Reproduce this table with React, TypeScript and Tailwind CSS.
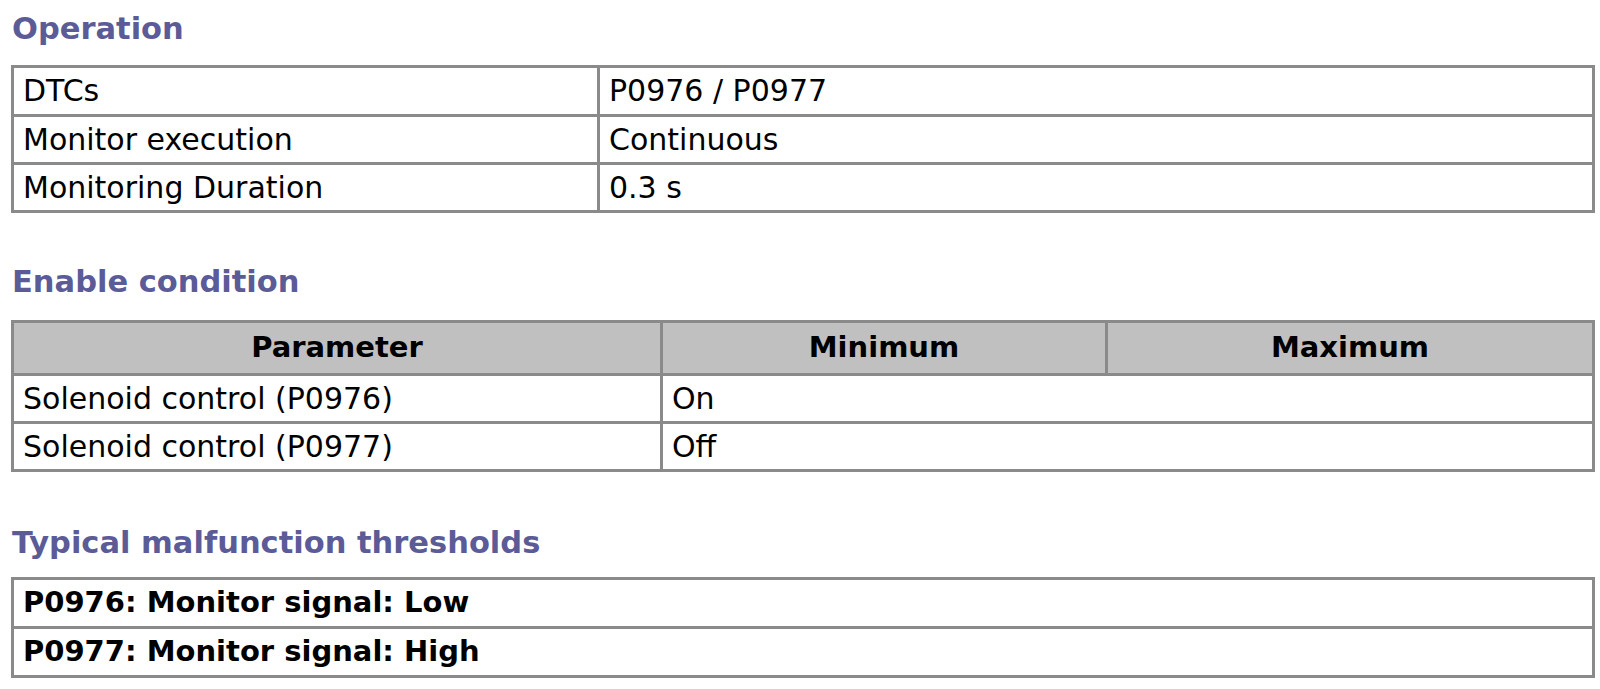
const cellText = "text-[30px] leading-none text-black";

function Heading({ children }: { children: string }) {
  return (
    <h2 className="pl-[12px] text-[30.5px] leading-[36px] font-bold text-[#5b5b97]">
      {children}
    </h2>
  );
}

function Row({ height, cells }: { height: string; cells: [string, string] }) {
  return (
    <div className={`flex ${height}`}>
      <div className={`w-[586px] shrink-0 flex items-center pl-[9px] border-r-[3px] border-[#8a8a8a] ${cellText}`}>
        {cells[0]}
      </div>
      <div className={`flex-1 flex items-center pl-[9px] ${cellText}`}>{cells[1]}</div>
    </div>
  );
}

function ParamRow({ cells }: { cells: [string, string] }) {
  return (
    <div className="flex h-[48px] border-t-[3px] border-[#8a8a8a]">
      <div className={`w-[649px] shrink-0 flex items-center pl-[9px] border-r-[3px] border-[#8a8a8a] ${cellText}`}>
        {cells[0]}
      </div>
      <div className={`flex-1 flex items-center pl-[9px] ${cellText}`}>{cells[1]}</div>
    </div>
  );
}

export default function App() {
  return (
    <div className="min-h-screen bg-white font-['DejaVu_Sans',Verdana,sans-serif]">
      <div className="pt-[11px] pb-[14px]">
        <Heading>Operation</Heading>
        <div className="ml-[11px] mt-[18px] w-[1584px] border-[3px] border-[#8a8a8a]">
          <Row height="h-[46px]" cells={["DTCs", "P0976 / P0977"]} />
          <Row height="h-[48px] border-t-[3px] border-[#8a8a8a]" cells={["Monitor execution", "Continuous"]} />
          <Row height="h-[48px] border-t-[3px] border-[#8a8a8a]" cells={["Monitoring Duration", "0.3 s"]} />
        </div>

        <div className="mt-[51px]">
          <Heading>Enable condition</Heading>
        </div>
        <div className="ml-[11px] mt-[20px] w-[1584px] border-[3px] border-[#8a8a8a]">
          <div className="flex h-[50px] bg-[#c0c0c0]">
            <div className="w-[649px] shrink-0 flex items-center justify-center border-r-[3px] border-[#8a8a8a] text-[29px] font-bold text-black">
              Parameter
            </div>
            <div className="w-[445px] shrink-0 flex items-center justify-center border-r-[3px] border-[#8a8a8a] text-[29px] font-bold text-black">
              Minimum
            </div>
            <div className="flex-1 flex items-center justify-center text-[29px] font-bold text-black">
              Maximum
            </div>
          </div>
          <ParamRow cells={["Solenoid control (P0976)", "On"]} />
          <ParamRow cells={["Solenoid control (P0977)", "Off"]} />
        </div>

        <div className="mt-[53px]">
          <Heading>Typical malfunction thresholds</Heading>
        </div>
        <div className="ml-[11px] mt-[16px] w-[1584px] border-[3px] border-[#8a8a8a]">
          <div className="flex h-[46px] items-center pl-[9px] text-[29px] font-bold text-black">
            P0976: Monitor signal: Low
          </div>
          <div className="flex h-[49px] items-center pl-[9px] border-t-[3px] border-[#8a8a8a] text-[29px] font-bold text-black">
            P0977: Monitor signal: High
          </div>
        </div>
      </div>
    </div>
  );
}
